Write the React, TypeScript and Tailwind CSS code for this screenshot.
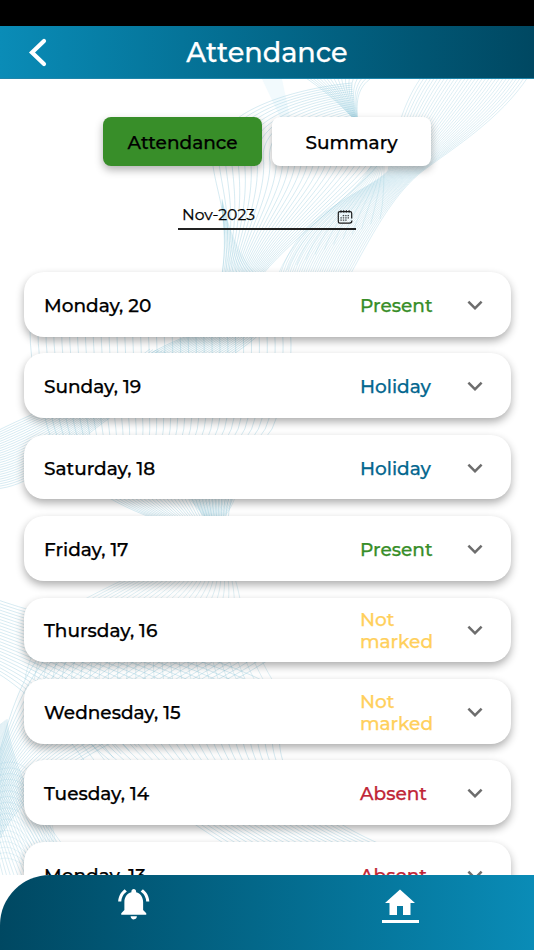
import { useState } from "react";
import { MdExpandMore, MdHome, MdNotificationsActive } from "react-icons/md";

type Status = "Present" | "Holiday" | "Not marked" | "Absent";

type Day = {
  label: string;
  status: Status;
};

const days: Day[] = [
  { label: "Monday, 20", status: "Present" },
  { label: "Sunday, 19", status: "Holiday" },
  { label: "Saturday, 18", status: "Holiday" },
  { label: "Friday, 17", status: "Present" },
  { label: "Thursday, 16", status: "Not marked" },
  { label: "Wednesday, 15", status: "Not marked" },
  { label: "Tuesday, 14", status: "Absent" },
  { label: "Monday, 13", status: "Absent" },
];

const statusColor: Record<Status, string> = {
  Present: "text-[#388e29]",
  Holiday: "text-[#04678f]",
  "Not marked": "text-[#ffd05c]",
  Absent: "text-[#c02637]",
};

const tabs = ["Attendance", "Summary"];

// each band is a set of curves blended from the first one to the last one
type Band = {
  from: number[];
  to: number[];
  count: number;
  opacity: number;
};

const bands: Band[] = [
  {
    from: [420, 0, 400, 30, 395, 60, 388, 92, 365, 115, 300, 130, 280, 196],
    to: [528, -2, 500, 40, 455, 68, 424, 91, 395, 113, 375, 150, 350, 196],
    count: 32,
    opacity: 0.28,
  },
  {
    from: [352, 4, 290, 10, 205, 35, 213, 87, 218, 120, 230, 140, 222, 196],
    to: [358, 60, 364, 65, 380, 70, 384, 76, 375, 100, 300, 150, 262, 196],
    count: 28,
    opacity: 0.32,
  },
  { from: [370, 0, 354, 12, 357, 30, 358, 45], to: [300, -5, 330, 15, 345, 30, 358, 45], count: 18, opacity: 0.3 },
  { from: [222, 130, 224, 150, 226, 170, 222, 196], to: [222, 120, 228, 150, 240, 180, 256, 196], count: 10, opacity: 0.2 },
  { from: [384, 80, 384, 100, 384, 120, 380, 140], to: [374, 80, 360, 120, 300, 140, 278, 196], count: 12, opacity: 0.22 },
  {
    from: [30, 250, 30, 290, 40, 320, 48, 350, 60, 390, 100, 420, 155, 440],
    to: [290, 250, 295, 290, 280, 330, 272, 350, 250, 380, 232, 400, 228, 440],
    count: 34,
    opacity: 0.32,
  },
  { from: [200, 250, 190, 258, 160, 265, 135, 285], to: [275, 240, 255, 262, 240, 270, 220, 285], count: 26, opacity: 0.36 },
  { from: [150, 270, 100, 310, 40, 330, -5, 353], to: [225, 285, 90, 320, 60, 405, -5, 410], count: 26, opacity: 0.32 },
  {
    from: [238, 405, 232, 460, 160, 480, 85, 520, 50, 540, 30, 570, 25, 600],
    to: [170, 400, 225, 450, 236, 500, 240, 520, 250, 560, 265, 590, 275, 605],
    count: 28,
    opacity: 0.26,
  },
  { from: [-10, 518, 60, 545, 180, 560, 270, 605], to: [-10, 590, 10, 600, 50, 630, 90, 690], count: 24, opacity: 0.32 },
  { from: [45, 570, 20, 600, 8, 640, -5, 690], to: [270, 580, 160, 650, 30, 680, -5, 770], count: 28, opacity: 0.32 },
  { from: [85, 660, 130, 700, 170, 730, 225, 765], to: [280, 650, 275, 690, 300, 730, 380, 765], count: 26, opacity: 0.32 },
  { from: [7, 640, 10, 680, 30, 730, 90, 800], to: [-20, 660, -20, 730, -15, 760, -10, 810], count: 26, opacity: 0.28 },
  { from: [-10, 690, 20, 670, 50, 690, 60, 800], to: [-10, 790, 0, 770, 20, 780, 40, 800], count: 18, opacity: 0.18 },
];

function bandPath({ from, to, count }: Band) {
  return Array.from({ length: count }, (_, i) => {
    const p = from.map((n, k) => (n + ((to[k] - n) * i) / (count - 1)).toFixed(1));
    return `M${p[0]} ${p[1]}C${p.slice(2).join(" ")}`;
  }).join("");
}

function Waves() {
  return (
    <svg className="absolute inset-0" width="534" height="796" viewBox="0 0 534 796" fill="none">
      <path d="M262 0h20l8 38-10 0z" fill="#f2fafd" />
      {bands.map((band, i) => (
        <path
          key={i}
          d={bandPath(band)}
          stroke="#84c2d6"
          strokeWidth="1"
          opacity={band.opacity}
        />
      ))}
    </svg>
  );
}

function CalendarIcon() {
  return (
    <svg width="16" height="16" viewBox="0 0 16 16" fill="none" stroke="#1c1c1c">
      <path d="M14.7 9.5V4.2c0-1-.6-1.6-1.6-1.6H2.9c-1 0-1.6.6-1.6 1.6v8.4c0 1 .6 1.6 1.6 1.6h9.8" strokeWidth="1.2" />
      <path d="M14.9 11.5c0 1.6-.9 2.7-2.4 2.7" strokeWidth="1.2" />
      <path d="M4 1.2v2.4M6.7 1.2v2.4M9.4 1.2v2.4M12.1 1.2v2.4" strokeWidth="1.2" />
      <path d="M5.8 6.6h7M3.4 8.9h9.4M3.4 11.2h7" strokeWidth="1.2" strokeDasharray="1.4 1" opacity="0.8" />
    </svg>
  );
}

function App() {
  const [tab, setTab] = useState("Attendance");

  return (
    <div className="flex h-[950px] w-[534px] flex-col overflow-hidden bg-white font-['Montserrat','Inter','Liberation_Sans',sans-serif] font-medium text-black [-webkit-text-stroke:0.25px]">
      <div className="h-[26px] shrink-0 bg-black" />

      <header className="grid h-[53px] shrink-0 grid-cols-[76px_1fr_76px] items-center border-b border-[#1f86ab] bg-linear-to-r from-[#0a8cb7] to-[#004862] text-white">
        <button className="pl-[27px]" aria-label="Back">
          <svg width="22" height="30" viewBox="0 0 22 30" fill="none">
            <path d="M17 4L5 15.5L17 27" stroke="white" strokeWidth="4.2" strokeLinecap="round" />
          </svg>
        </button>
        <h1 className="pt-[2px] text-center text-[27.1px] leading-none">Attendance</h1>
      </header>

      <main className="relative min-h-0 flex-1 overflow-hidden">
        <Waves />

        <div className="relative flex flex-col items-center">
          <div className="mt-[38px] flex gap-[10px]">
            {tabs.map((name) => (
              <button
                key={name}
                onClick={() => setTab(name)}
                className={`h-[49px] w-[159px] rounded-lg pt-[3px] text-[18.5px] shadow-[0_4px_8px_rgba(0,0,0,0.3)] ${
                  tab === name ? "bg-[#388e29]" : "bg-white"
                }`}
              >
                {name}
              </button>
            ))}
          </div>

          <div className="mt-[37px] flex h-[27px] w-[178px] justify-between border-b-2 border-[#222] pr-[3.5px] pl-1">
            <span className="text-[15.6px] leading-[23px] font-normal">Nov-2023</span>
            <span className="pt-[6px]">
              <CalendarIcon />
            </span>
          </div>

          <div className="mt-[42px] flex w-[487px] flex-col gap-[16.8px]">
            {days.map((day) => (
              <div
                key={day.label}
                className="flex h-[64.6px] items-center rounded-[20px] bg-white pt-[3px] pl-[20.5px] text-[18.5px] leading-[22px] shadow-[0_4px_8px_rgba(0,0,0,0.32)]"
              >
                <span className="w-[316px]">{day.label}</span>
                <span className={`w-[76px] ${statusColor[day.status]}`}>{day.status}</span>
                <MdExpandMore className="-mt-[2px] ml-6 size-[30px] text-[#6d6d6d]" />
              </div>
            ))}
          </div>
        </div>
      </main>

      <footer className="grid h-[75px] shrink-0 grid-cols-2 rounded-tl-[50px] bg-linear-to-r from-[#004862] to-[#0a8cb7] text-white">
        <button className="flex justify-center pt-[10px]" aria-label="Notifications">
          <MdNotificationsActive className="size-[37.5px]" />
        </button>
        <button className="flex flex-col items-center pt-[10px] pr-px" aria-label="Home">
          <MdHome className="size-9" />
          <span className="-mt-px h-[3px] w-[37px] bg-white" />
        </button>
      </footer>
    </div>
  );
}

export default App;
